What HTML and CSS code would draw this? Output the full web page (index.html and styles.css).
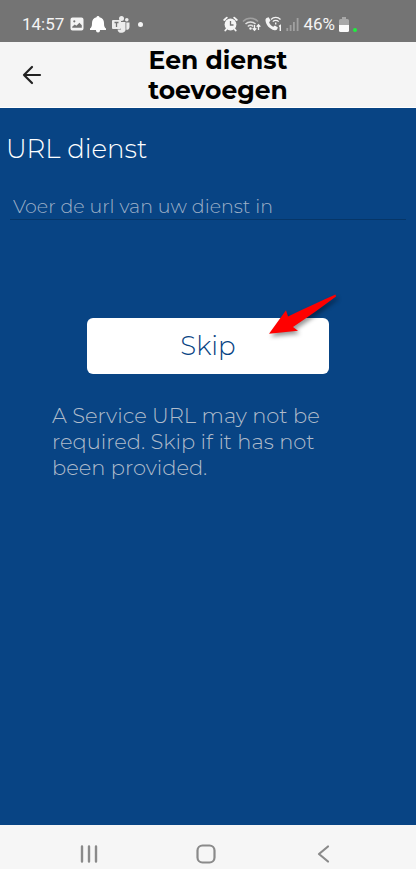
FILE: index.html
```html
<!DOCTYPE html>
<html lang="nl">
<head>
    <meta charset="UTF-8">
    <meta name="viewport" content="width=device-width, initial-scale=1.0">
    <title>Een dienst toevoegen</title>
    <link rel="stylesheet" href="styles.css">
</head>
<body>
    <div class="status-bar">
        <div class="status-left">
            <span class="clock">14:57</span>
            <svg width="14" height="14" viewBox="0 0 14 14">
                <path fill="#f4f4f4" fill-rule="evenodd" d="M2.5 0.5h9a2 2 0 0 1 2 2v9a2 2 0 0 1-2 2h-9a2 2 0 0 1-2-2v-9a2 2 0 0 1 2-2zM2.2 10.8h9.6v-2.6l-2.4-2.4-3 3-1.6-1.4-2.6 2.4zM4.3 3.2a1.1 1.1 0 1 0 .01 0z"/>
            </svg>
            <svg width="16" height="18" viewBox="0 0 16 18">
                <path fill="#fff" d="M8 1a1.500 1.500 0 0 1 1.500 1.300C12.500 3 14 5.200 14 8c0 3.400.5 4.400 2 5.500V15H0v-1.500C1.500 12.400 2 11.400 2 8c0-2.800 1.500-5 4.500-5.700A1.500 1.500 0 0 1 8 1zM6 15h4v.5a2 2 0 0 1-4 0z"/>
            </svg>
            <svg width="18" height="18" viewBox="0 0 18 18">
                <g fill="#ececec">
                    <circle cx="9.500" cy="3.600" r="2.500"/>
                    <circle cx="14.800" cy="4.800" r="1.800"/>
                    <path d="M9 7h4.500v6a4 4 0 0 1-8 1.500H9zM14.300 7.500H17.500v4.500a2.800 2.800 0 0 1-3.200 2.800z"/>
                    <rect x="0" y="5" width="9" height="9" rx="1"/>
                </g>
                <path stroke="#747474" stroke-width="1.300" d="M2.500 7.500h4M4.500 7.500v4.500"/>
            </svg>
            <span class="more-dot"></span>
        </div>
        <div class="status-right">
            <svg width="15" height="16" viewBox="0 0 15 16">
                <circle cx="7.500" cy="8.500" r="5.900" fill="#f4f4f4"/>
                <path fill="none" stroke="#f4f4f4" stroke-width="1.800" stroke-linecap="round" d="M1.200 4l2.600-2.300M13.800 4l-2.600-2.300M3.500 13l-1.200 1.500M11.500 13l1.200 1.500"/>
                <path fill="none" stroke="#747474" stroke-width="1.300" d="M7.500 5v4h3"/>
            </svg>
            <svg width="19" height="16" viewBox="0 0 19 16">
                <g fill="none" stroke-width="1.500">
                    <path stroke="#a0a0a0" d="M1 5.500a10.500 10.500 0 0 1 15 0"/>
                    <path stroke="#dedede" d="M3.500 8a7 7 0 0 1 10 0M5.800 10.500a3.800 3.800 0 0 1 5.400 0"/>
                    <path stroke="#f4f4f4" stroke-width="1.300" d="M12.500 9v5M10.700 12.300l1.800 1.900 1.800-1.900M16.500 14V9M14.700 10.700l1.800-1.900 1.800 1.900"/>
                </g>
                <circle cx="8.500" cy="12.500" r="1.200" fill="#f4f4f4"/>
            </svg>
            <svg width="17" height="16" viewBox="0 0 17 16">
                <path fill="#f4f4f4" d="M1.500 2l2.200-.8 1.800 3.300-1.400 1.700c.8 2 2.200 3.600 4.100 4.500l1.700-1.300 3 2-.9 2.200c-.5.6-1.500.8-2.500.6C4.500 13 1 9.200.5 4.500.4 3.300.8 2.400 1.500 2z"/>
                <path fill="none" stroke="#f4f4f4" stroke-width="1.200" d="M6 3.500a6.500 6.500 0 0 1 9.500 0M7.800 5.600a4 4 0 0 1 5.900 0"/>
                <path fill="none" stroke="#f4f4f4" stroke-width="1.400" d="M10.700 6.500v2M14 10.300l1.300-.8V15"/>
            </svg>
            <svg width="13" height="14" viewBox="0 0 13 14">
                <path stroke="#a0a0a0" stroke-width="1.800" d="M1.300 11v3M4.600 8v6M7.900 5v9M11.600 1v13"/>
            </svg>
            <span class="battery-text">46%</span>
            <svg width="10" height="15" viewBox="0 0 10 15">
                <path fill="#a8a8a8" d="M3 0h4v2h1.500A1.500 1.500 0 0 1 10 3.500V8H0V3.500A1.500 1.500 0 0 1 1.500 2H3z"/>
                <path fill="#fafafa" d="M0 8h10v5.500a1.500 1.500 0 0 1-1.500 1.500h-7A1.500 1.500 0 0 1 0 13.500z"/>
            </svg>
            <span class="privacy-dot"></span>
        </div>
    </div>

    <header class="app-bar">
        <button type="button" class="back-button" aria-label="Terug">
            <svg width="20" height="20" viewBox="0 0 20 20">
                <path fill="none" stroke="#222" stroke-width="2.200" stroke-linecap="round" stroke-linejoin="round" d="M18 10H2M10 2l-8 8 8 8"/>
            </svg>
        </button>
        <h1 class="title">Een dienst toevoegen</h1>
    </header>

    <main class="content">
        <form>
            <label for="serviceUrl" class="url-label">URL dienst</label>
            <input type="text" id="serviceUrl" name="serviceUrl" class="url-input" placeholder="Voer de url van uw dienst in">
            <div class="skip-container">
                <button type="button" class="skip-button">Skip</button>
                <svg class="pointer" width="84" height="56" viewBox="0 0 84 56">
                    <path fill="#f00" d="M9 43.700L26 20.300L28 26.500C44 19 60 11 75.500 4.500L76 6.500C62 17 48 27 33 37L38 40.700Z"/>
                </svg>
            </div>
        </form>
        <p class="hint">A Service URL may not be required. Skip if it has not been provided.</p>
    </main>

    <nav class="nav-bar">
        <button type="button" aria-label="Recente apps">
            <svg width="20" height="20" viewBox="0 0 20 20">
                <path stroke="#8a8a8a" stroke-width="2.400" stroke-linecap="round" d="M3 2.500v15M10 2.500v15M17 2.500v15"/>
            </svg>
        </button>
        <button type="button" aria-label="Startscherm">
            <svg width="20" height="20" viewBox="0 0 20 20">
                <rect x="1.500" y="1.500" width="17" height="17" rx="5" fill="none" stroke="#8a8a8a" stroke-width="2.200"/>
            </svg>
        </button>
        <button type="button" aria-label="Terug">
            <svg width="20" height="20" viewBox="0 0 20 20">
                <path fill="none" stroke="#8a8a8a" stroke-width="2.200" stroke-linecap="round" stroke-linejoin="round" d="M15 2.500L6 10l9 7.500"/>
            </svg>
        </button>
    </nav>
</body>
</html>
```
FILE: styles.css
```css
* {
    box-sizing: border-box;
}

body {
    margin: 0;
    min-height: 100vh;
    display: flex;
    flex-direction: column;
    font-family: Montserrat, Inter, sans-serif;
    background-color: #084484;
}

button {
    border: none;
    padding: 0;
    background: none;
    font-family: inherit;
    cursor: pointer;
}

svg {
    display: block;
}

.status-bar {
    height: 42px;
    padding: 6px 59px 0 22px;
    display: flex;
    justify-content: space-between;
    align-items: center;
    background-color: #747474;
    color: #f4f4f4;
    font-family: Roboto, sans-serif;
    font-size: 17px;
}

.status-left,
.status-right {
    display: flex;
    align-items: center;
    gap: 6px;
}

.status-right {
    gap: 4px;
}

.more-dot {
    width: 5px;
    height: 5px;
    margin-left: 2px;
    border-radius: 50%;
    background-color: #f4f4f4;
}

.privacy-dot {
    width: 4px;
    height: 4px;
    margin-top: 12px;
    border-radius: 50%;
    background-color: #1fef3f;
}

.app-bar {
    height: 66px;
    padding: 0 20px 0 22px;
    display: grid;
    grid-template-columns: 40px 1fr 22px;
    align-items: center;
    background-color: #f5f5f5;
    border-bottom: 1px solid #fff;
}

.title {
    width: 180px;
    margin: 0 auto;
    color: #000;
    font-size: 25px;
    font-weight: 700;
    line-height: 30px;
    text-align: center;
}

.content {
    flex: 1;
    padding: 24px 6px;
}

.url-label {
    display: block;
    color: #fff;
    font-size: 26px;
    font-weight: 300;
    line-height: 34px;
}

.url-input {
    display: block;
    width: calc(100% - 8px);
    height: 30px;
    margin: 24px 4px 0;
    padding: 4px 3px 0;
    border: none;
    border-bottom: 1px solid #063668;
    outline: none;
    background: none;
    color: #fff;
    font-family: inherit;
    font-size: 19px;
    font-weight: 300;
}

.url-input::placeholder {
    color: #9fb1c8;
    opacity: 1;
}

.skip-container {
    position: relative;
    width: 60%;
    margin: 98px auto 0;
}

.skip-button {
    display: block;
    width: 100%;
    height: 56px;
    border-radius: 6px;
    background-color: #fff;
    color: #084484;
    font-size: 26px;
    font-weight: 300;
}

/* red arrow over the corner of the button */
.pointer {
    position: absolute;
    top: -28px;
    right: -15px;
    filter: drop-shadow(2px 3px 2px rgba(0, 0, 0, 0.4));
}

.hint {
    max-width: 290px;
    margin: 29px 46px 0;
    color: #b0bccb;
    font-size: 21px;
    font-weight: 300;
    line-height: 26px;
}

.nav-bar {
    height: 44px;
    padding: 13px 35px 0 31px;
    display: flex;
    justify-content: space-around;
    background-color: #f6f6f6;
}
```
